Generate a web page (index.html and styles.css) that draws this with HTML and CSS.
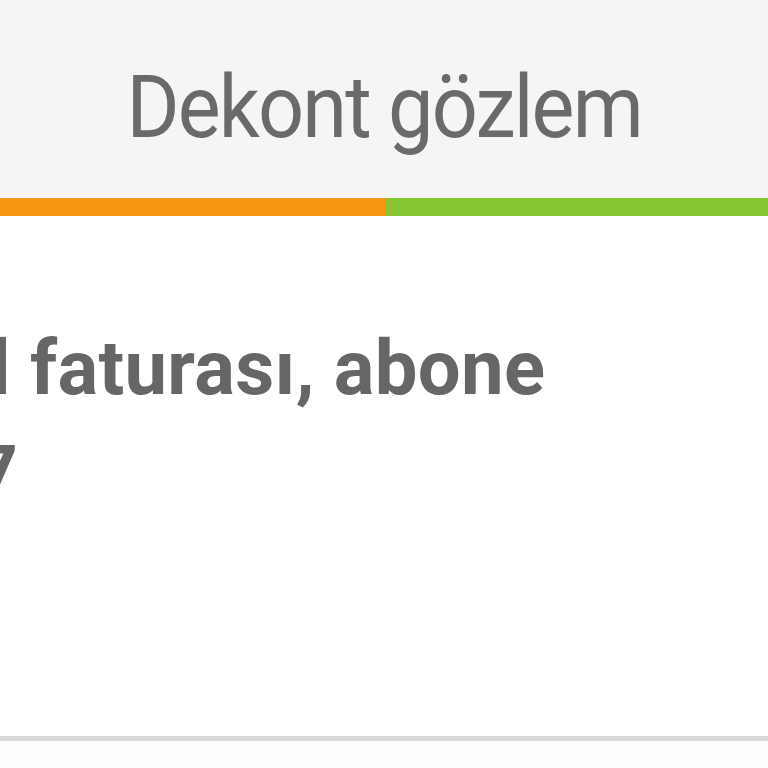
FILE: index.html
```html
<!DOCTYPE html>
<html lang="tr">
<head>
<meta charset="utf-8">
<link rel="stylesheet" href="styles.css">
</head>
<body>
<div class="page">
  <header class="header">
    <h1 class="title">Dekont gözlem</h1>
  </header>
  <div class="bar">
    <div class="bar-orange"></div>
    <div class="bar-green"></div>
  </div>
  <main class="content">
    <p class="desc">Özel faturası, abone<br>No 7</p>
  </main>
  <div class="rule"></div>
  <div class="after"></div>
</div>
</body>
</html>
```
FILE: styles.css
```css
html, body {
  margin: 0;
  padding: 0;
  background: #ffffff;
}
.page {
  width: 768px;
  height: 768px;
  overflow: hidden;
  display: flex;
  flex-direction: column;
}
.header {
  height: 198px;
  background: #f5f5f5;
  display: flex;
  align-items: center;
  justify-content: center;
}
.title {
  margin: 0;
  font-family: Roboto, "Liberation Sans", sans-serif;
  font-weight: 400;
  font-size: 88px;
  color: #6a6a6a;
  letter-spacing: -2px;
  line-height: 1;
  transform: scaleX(0.92);
  padding-top: 16px;
}
.bar {
  display: flex;
  height: 18px;
}
.bar-orange {
  width: 386px;
  background: #f7960f;
}
.bar-green {
  flex: 1;
  background: #85c732;
}
.content {
  height: 520px;
  background: #ffffff;
  padding-top: 100px;
  box-sizing: border-box;
}
.desc {
  margin: 0 0 0 -142px;
  font-family: Roboto, "Liberation Sans", sans-serif;
  font-weight: 700;
  font-size: 76px;
  line-height: 105px;
  color: #666666;
  letter-spacing: 0.3px;
  white-space: nowrap;
}
.rule {
  height: 5px;
  background: #d9d9d9;
}
.after {
  flex: 1;
  background: #fdfdfd;
}
```
